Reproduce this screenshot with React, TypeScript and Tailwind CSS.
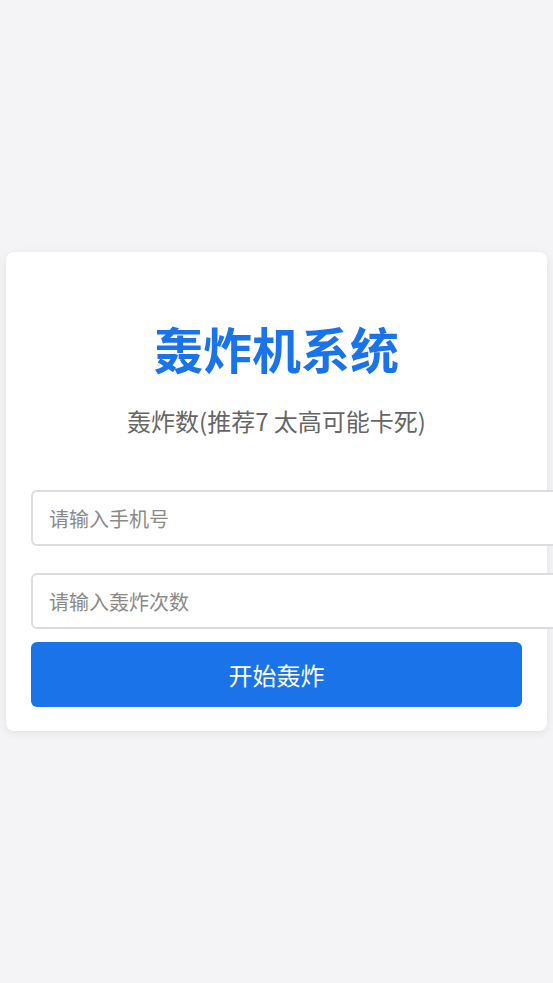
import React from "react";

export default function App() {
  return (
    <div className="min-h-screen w-full bg-[#f4f4f7] flex items-center overflow-hidden font-['Noto_Sans_CJK_SC','Noto_Sans',sans-serif]">
      <div className="mx-[6px] w-[541px] bg-white rounded-lg shadow-[0_2px_10px_rgba(0,0,0,0.08)] px-[25px] pt-[25px] pb-[24px]">
        <h1 className="mt-[41px] text-center text-[49px] leading-[60px] font-bold text-[#1a73e8]">
          轰炸机系统
        </h1>
        <p className="mt-[27px] text-center text-[24px] leading-[32px] text-[#666666]">
          轰炸数(推荐7 太高可能卡死)
        </p>
        <input
          type="tel"
          placeholder="请输入手机号"
          className="block mt-[53px] w-[527px] h-[56px] border-2 border-[#dddddd] rounded-md px-4 text-[20px] text-[#333] placeholder:text-[#8a8a8a] bg-white outline-none"
        />
        <input
          type="number"
          placeholder="请输入轰炸次数"
          className="block mt-[27px] w-[527px] h-[56px] border-2 border-[#dddddd] rounded-md px-4 text-[20px] text-[#333] placeholder:text-[#8a8a8a] bg-white outline-none"
        />
        <button className="block mt-[13px] w-full h-[65px] rounded-md bg-[#1a73e8] text-white text-[24px]">
          开始轰炸
        </button>
      </div>
    </div>
  );
}
